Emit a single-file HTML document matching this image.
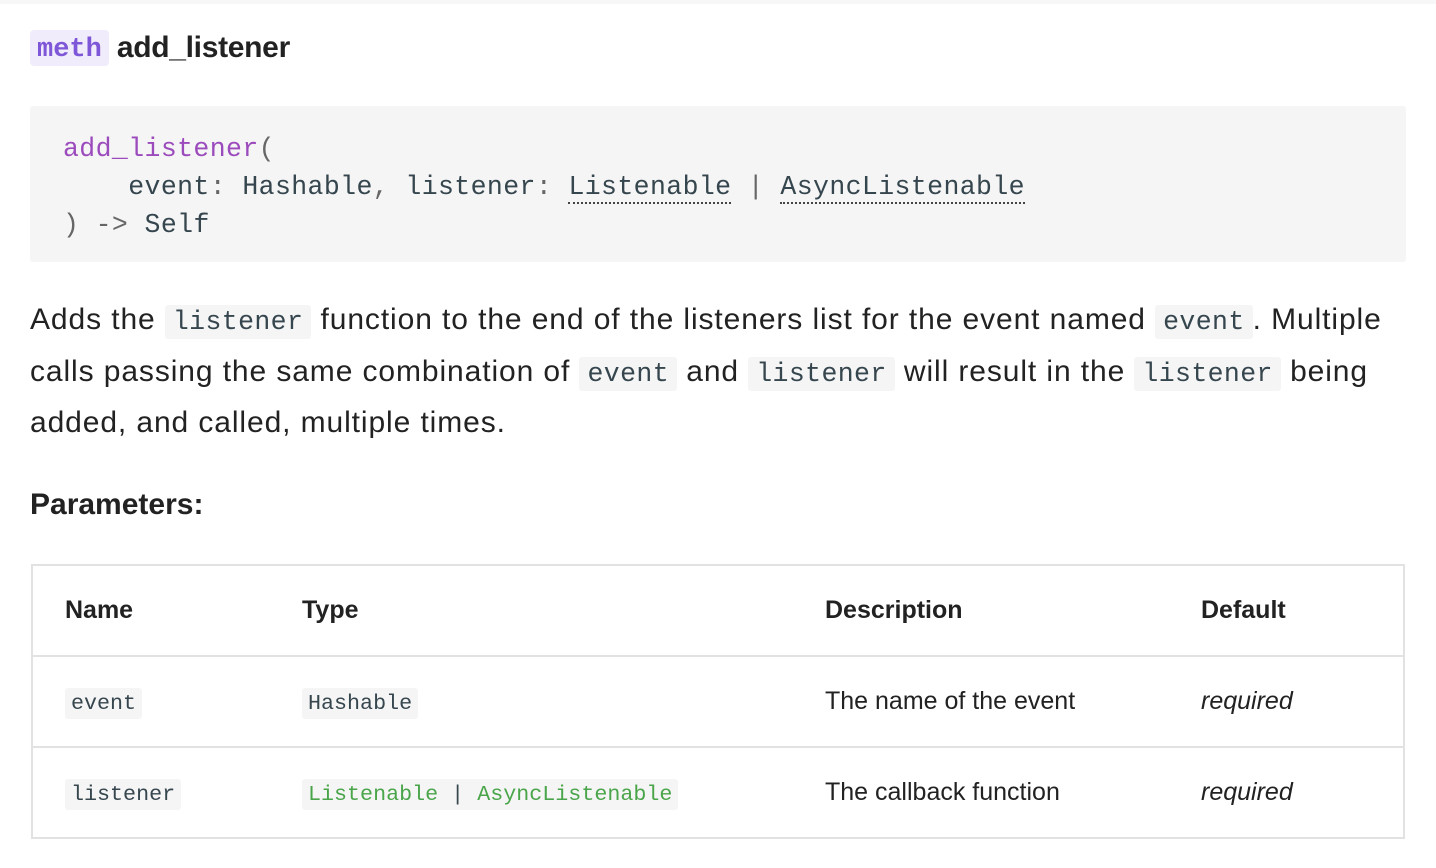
<!DOCTYPE html>
<html><head><meta charset="utf-8"><style>
body{margin:0;background:#fff;width:1436px;height:868px;overflow:hidden;font-family:"Liberation Sans",sans-serif;color:#222;position:relative}
.top{position:absolute;left:0;top:0;width:1436px;height:4px;background:#f7f7f7}
.mono{font-family:"Liberation Mono",monospace}
.h{position:absolute;left:30px;top:30px;height:36px;display:flex;align-items:center}
.badge{background:#f1ecfb;color:#7e56d8;font-weight:bold;font-size:27px;padding:0 7px;height:36px;line-height:40px;border-radius:4px;margin-right:8px}
.h b{font-size:30px;letter-spacing:-0.3px}
.code{position:absolute;left:30px;top:106px;width:1376px;height:156px;background:#f5f5f5;border-radius:3px}
.code pre{margin:0;position:absolute;left:33px;top:24px;font-size:26.5px;line-height:38px;color:#36464e;letter-spacing:0.4px}
.fn{color:#9c4bbd}.p{color:#666}
.u{border-bottom:2px dotted #444}
.para{position:absolute;left:30px;top:294px;font-size:30px;line-height:51.5px;color:#222;width:1400px;letter-spacing:0.9px}
.ic{font-family:"Liberation Mono",monospace;background:#f5f5f5;font-size:26.5px;padding:2px 8px;border-radius:3px;color:#36464e;line-height:20px;letter-spacing:0.4px}
.params{position:absolute;left:30px;top:488px;font-size:30px;font-weight:bold}
table{position:absolute;left:31px;top:564px;width:1374px;border:2px solid #e2e2e2;border-collapse:collapse}
td,th{height:89px;border-top:2px solid #e2e2e2;text-align:left;padding:0;font-size:25px}
th{font-weight:bold;border-top:none}
.tc{font-family:"Liberation Mono",monospace;background:#f5f5f5;font-size:21.7px;padding:3px 6px;border-radius:3px;color:#36464e}
.g{color:#4aa54a}
</style></head><body>
<div class="top"></div>
<div class="h"><span class="badge mono">meth</span><b>add_listener</b></div>
<div class="code"><pre class="mono"><span class="fn">add_listener</span><span class="p">(</span>
    event<span class="p">:</span> Hashable<span class="p">,</span> listener<span class="p">:</span> <span class="u">Listenable</span> <span class="p">|</span> <span class="u">AsyncListenable</span>
<span class="p">)</span> <span class="p">-&gt;</span> Self</pre></div>
<div class="para">Adds the <span class="ic">listener</span> function to the end of the listeners list for the event named <span class="ic">event</span>. Multiple<br>calls passing the same combination of <span class="ic">event</span> and <span class="ic">listener</span> will result in the <span class="ic">listener</span> being<br>added, and called, multiple times.</div>
<div class="params">Parameters:</div>
<table>
<tr><th style="padding-left:32px;width:237px">Name</th><th style="width:523px">Type</th><th style="width:376px">Description</th><th>Default</th></tr>
<tr><td style="padding-left:32px"><span class="tc">event</span></td><td><span class="tc">Hashable</span></td><td>The name of the event</td><td><i>required</i></td></tr>
<tr><td style="padding-left:32px"><span class="tc">listener</span></td><td><span class="tc"><span class="g">Listenable</span> | <span class="g">AsyncListenable</span></span></td><td>The callback function</td><td><i>required</i></td></tr>
</table>
</body></html>
